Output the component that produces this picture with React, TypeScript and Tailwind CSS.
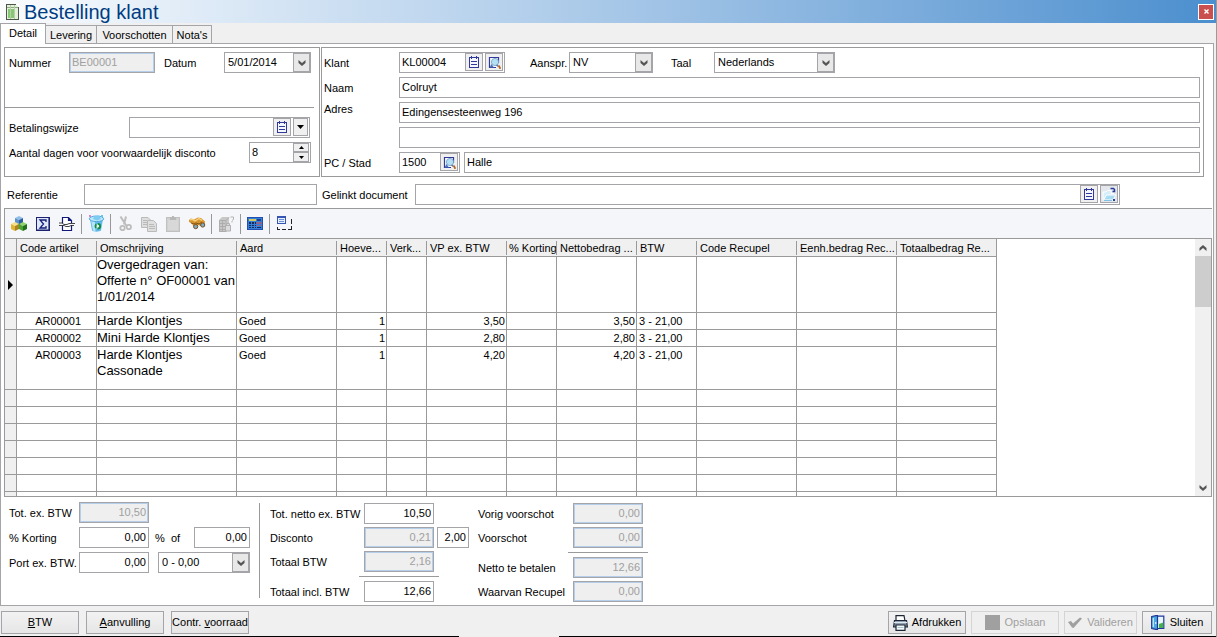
import React from "react";

type BoxProps = { className?: string; children?: React.ReactNode };

const LINE = "border-[#a5a5a9]";

function Label({ id, className = "", children }: BoxProps & { id: string }) {
  return (
    <label htmlFor={id} className={`h-[21px] shrink-0 whitespace-nowrap leading-[23px] ${className}`}>
      {children}
    </label>
  );
}

function Field({
  id,
  value = "",
  disabled = false,
  right = false,
  className = "",
}: {
  id: string;
  value?: string;
  disabled?: boolean;
  right?: boolean;
  className?: string;
}) {
  return (
    <input
      id={id}
      defaultValue={value}
      disabled={disabled}
      className={`h-[21px] min-w-0 border px-[2px] pb-[2px] leading-4 outline-none ${LINE} ${right ? "text-right" : ""} ${
        disabled ? "bg-[#efefef] text-[#a0a0a0] ring-1 ring-inset ring-[#b5cfea]" : "bg-white"
      } ${className}`}
    />
  );
}

function Combo({ id, value, className = "" }: { id: string; value: string; className?: string }) {
  return (
    <div className={`relative flex h-[21px] shrink-0 ${className}`}>
      <select
        id={id}
        defaultValue={value}
        className={`w-full appearance-none border bg-white pl-[3px] pr-5 pb-px leading-4 outline-none ${LINE}`}
      >
        <option>{value}</option>
      </select>
      <span
        className={`pointer-events-none absolute inset-y-0 right-0 flex w-[18px] items-center justify-center border-2 border-l bg-[#e8e8e8] ${LINE}`}
      >
        <Chevron />
      </span>
    </div>
  );
}

function Chevron({ up = false }: { up?: boolean }) {
  return (
    <svg width="8" height="6" viewBox="0 0 8 6" className={up ? "rotate-180" : ""}>
      <path d="M0.5 0L4 3L7.5 0V3L4 6L0.5 3Z" fill="#555" />
    </svg>
  );
}

function MiniButton({ label, className = "w-[18px]", children }: BoxProps & { label: string }) {
  return (
    <button
      type="button"
      aria-label={label}
      className={`flex h-[18px] shrink-0 items-center justify-center border bg-[#f0f0f0] ${LINE} ${className}`}
    >
      {children}
    </button>
  );
}

function Composite({ id, value = "", className = "", children }: BoxProps & { id: string; value?: string }) {
  return (
    <div className={`flex h-[21px] items-start gap-[2px] border bg-white pr-px ${LINE} ${className}`}>
      <input id={id} defaultValue={value} className="h-[19px] w-0 min-w-0 flex-1 bg-transparent px-[2px] pb-[2px] leading-4 outline-none" />
      {children}
    </div>
  );
}

const ListIcon = () => (
  <svg width="12" height="13" viewBox="0 0 12 13" shapeRendering="crispEdges">
    <rect x="1" y="1" width="10" height="11" fill="#30389a" />
    <rect x="2" y="2" width="8" height="9" fill="#f4f7ff" />
    <path d="M3 0H4V3H3ZM8 0H9V3H8ZM3 5H9V6H3ZM3 8H9V9H3Z" fill="#30389a" />
  </svg>
);

const SearchIcon = () => (
  <svg width="13" height="13" viewBox="0 0 13 13">
    <path d="M10.5 7V1.5H1.5V11.5H8" fill="#fff" stroke="#30389a" strokeWidth="1.2" />
    <circle cx="7" cy="6" r="3.6" fill="#b4e0f4" stroke="#6f9cc4" strokeWidth="0.8" />
    <path d="M3.5 8L1.5 11.5H6Z" fill="#4d74b8" />
    <path d="M8.5 9L10.5 10.5" stroke="#5d6f9c" strokeWidth="1.5" />
    <path d="M10.8 9.5L12.3 12.8" stroke="#b5651d" strokeWidth="1.8" />
  </svg>
);

const FolderIcon = () => (
  <svg width="16" height="16" viewBox="0 0 16 16">
    <rect width="16" height="16" fill="#e4e8ec" />
    <path d="M2 13.5V6H5L6.5 4.5H10V7.5H13" fill="#d4eefa" stroke="#fff" />
    <path d="M2.5 14L5.5 9H15L12 14Z" fill="#a9dcf3" stroke="#fff" />
    <path d="M3 14.5H11" stroke="#7fc2e4" />
    <path d="M9.5 2.5H12.5L13.5 3.5V5.5H11.5" fill="none" stroke="#283a9c" strokeWidth="1.5" />
    <rect x="12" y="13" width="2" height="2" fill="#283a9c" />
  </svg>
);

const SheetIcon = () => (
  <svg width="13" height="16" viewBox="0 0 13 16" shapeRendering="crispEdges">
    <rect width="13" height="16" fill="#4b5648" />
    <rect x="1" y="1" width="11" height="14" fill="#e3efda" />
    <path d="M1 3H12V4H1Z" fill="#8ca880" />
    <rect x="2" y="5" width="6" height="9" fill="#85c773" />
    <path d="M4 1H5V15H4ZM8 1H9V15H8Z" fill="#b5cfa8" />
    <path d="M10 0H13V3H12V2H11V1H10Z" fill="#fff" />
  </svg>
);

function Cube({ x, y, top, left, right }: { x: number; y: number; top: string; left: string; right: string }) {
  return (
    <g transform={`translate(${x} ${y})`}>
      <path d="M0 2L4 0L8 2L4 4Z" fill={top} />
      <path d="M0 2L4 4V9L0 7Z" fill={left} />
      <path d="M8 2L4 4V9L8 7Z" fill={right} />
    </g>
  );
}

const CubesIcon = () => (
  <svg width="16" height="16" viewBox="0 0 16 16">
    <Cube x={4} y={0} top="#8fbfe8" left="#5c92cc" right="#2c5c9c" />
    <Cube x={0} y={6} top="#f6e188" left="#e0b534" right="#a98420" />
    <Cube x={8} y={6} top="#8fd56a" left="#4aa633" right="#246f1c" />
  </svg>
);

const SigmaIcon = () => (
  <svg width="14" height="14" viewBox="0 0 14 14">
    <rect x="0.5" y="0.5" width="13" height="13" fill="#dfe8f8" stroke="#1b2370" />
    <path d="M1 13H13V1" fill="none" stroke="#1b2370" strokeWidth="1.2" />
    <path d="M10 5V3H4L7.5 7L4 11H10V9" fill="none" stroke="#151d78" strokeWidth="1.3" />
  </svg>
);

const PageBreakIcon = () => (
  <svg width="16" height="16" viewBox="0 0 16 16" fill="none" stroke="#10187a">
    <path d="M3.5 7V1.5H9.5L12.5 4.5V7M9.5 1.5V4.5H12.5M3.5 9V14.5H12.5V9" fill="#fff" strokeWidth="1.2" />
    <path d="M0 7H3L5 8.5H8L10 7.5H16M0 9.5H5L7 10.5H10L12 9.5H15" stroke="#333" strokeWidth="0.9" />
  </svg>
);

const BinIcon = () => (
  <svg width="17" height="17" viewBox="0 0 17 17">
    <path d="M2 4L4 15.5C6 17 11 17 13 15.5L15 4Z" fill="#62b9ea" />
    <path d="M3 5L5 15.5C6 16 7 16 7.5 16L7 6Z" fill="#b4e4f9" />
    <ellipse cx="8.5" cy="3.8" rx="7.2" ry="2.8" fill="#bfe8fa" stroke="#4ba8de" />
    <path d="M5 4L6 1.5L11 0.5L13 4L9 5.5Z" fill="#7ecbf2" />
    <rect x="1" y="0" width="2" height="2" fill="#dd86cf" />
    <rect x="13" y="0" width="2" height="2" fill="#61c8e5" />
    <circle cx="9.8" cy="11.2" r="2.3" fill="#dff6ea" stroke="#168a42" strokeWidth="1.9" strokeDasharray="3.6 1.2" />
  </svg>
);

const CutIcon = () => (
  <svg width="14" height="16" viewBox="0 0 14 16" fill="none" stroke="#bcbcbc">
    <path d="M2.5 0.5L8.5 10M8 0.5L6 8.5" strokeWidth="2" />
    <circle cx="4.5" cy="12" r="2.2" strokeWidth="1.8" />
    <circle cx="10.8" cy="11" r="2.2" strokeWidth="1.8" />
  </svg>
);

const CopyIcon = () => (
  <svg width="16" height="16" viewBox="0 0 16 16" fill="#dedede" stroke="#bababa">
    <path d="M0.5 1.5H7L9.5 4V11.5H0.5Z" />
    <path d="M2 4.5H6M2 6.5H6M2 8.5H6" />
    <path d="M6.5 4.5H12.5L15.5 7.5V15.5H6.5Z" />
    <path d="M8 8.5H13M8 10.5H14M8 12.5H14" />
  </svg>
);

const PasteIcon = () => (
  <svg width="14" height="16" viewBox="0 0 14 16">
    <rect x="0.5" y="1.5" width="13" height="14" fill="#d0d0d0" stroke="#c0c0c0" />
    <rect x="2" y="4" width="10" height="10" fill="#d8d8d8" />
    <path d="M4 1H6V0H8V1H10V4H4Z" fill="#b8b8b8" />
  </svg>
);

const BinocularsIcon = () => (
  <svg width="17" height="13" viewBox="0 0 17 13">
    <path d="M0 3L2 1.5L5 2.5L9 0.5L12 1L16 4.5L15.5 8L12 9L9 8L8 11L5 11L3 6.5L0 5Z" fill="#d8942c" />
    <path d="M1 3L3 2.3L6 4L10 1.5L13 3.5" fill="none" stroke="#f8d483" strokeWidth="1.3" />
    <path d="M2 6L5 7L7 6L10 7L13 5" fill="none" stroke="#8a5514" strokeWidth="1" />
    <circle cx="6.7" cy="9.6" r="2.1" fill="#7eabc4" stroke="#755024" />
    <circle cx="13.7" cy="8" r="2.1" fill="#7eabc4" stroke="#755024" />
  </svg>
);

const ServerIcon = () => (
  <svg width="17" height="16" viewBox="0 0 17 16">
    <path d="M1 4L4 1H11V13L8 16H1Z" fill="#c8c8c8" />
    <path d="M1.5 4.5H8V15.5H1.5ZM8 4.5L11 1.5M2 7.5H7M2 10.5H7M2 13.5H7M4.5 5V15" fill="none" stroke="#adadad" />
    <path d="M7.5 9.5H12.5V15H7.5ZM8.5 9V7.5H11.5V9" fill="#dcdcdc" stroke="#b0b0b0" />
    <path d="M12.5 1H15.5V3.5L14 4.5M14 5V6.5" fill="none" stroke="#b3b3b3" />
  </svg>
);

const CalculatorIcon = () => (
  <svg width="16" height="13" viewBox="0 0 16 13" shapeRendering="crispEdges">
    <rect width="16" height="13" fill="#2350b0" />
    <rect x="1" y="1" width="14" height="11" fill="#3480d8" />
    <rect x="2" y="2" width="7" height="2" fill="#d2c860" />
    <rect x="10" y="2" width="4" height="2" fill="#1d3f8c" />
    <path d="M2 5H4V7H2ZM5 5H7V7H5ZM8 5H9V7H8ZM2 8H4V9H2ZM5 8H7V9H5ZM8 8H9V9H8ZM2 10H4V11H2ZM5 10H7V11H5ZM8 10H9V11H8Z" fill="#14295e" />
    <path d="M10 5H12V7H10ZM13 5H14V7H13ZM10 8H12V9H10ZM13 8H14V9H13Z" fill="#e04848" />
    <path d="M10 10H14V11H10Z" fill="#14295e" />
  </svg>
);

const FormIcon = () => (
  <svg width="17" height="15" viewBox="0 0 17 15" shapeRendering="crispEdges">
    <rect x="1" y="0" width="9" height="8" fill="#3555b4" />
    <rect x="2" y="2" width="7" height="5" fill="#e6effc" />
    <path d="M3 3H8V4H3ZM3 5H8V6H3Z" fill="#6f8fd8" />
    <path d="M1 11H2V13H4V14H1ZM6 13H10V14H6ZM15 3H16V8H15ZM15 10H16V14H12V13H15Z" fill="#222" />
  </svg>
);

const PrinterIcon = () => (
  <svg width="15" height="16" viewBox="0 0 15 16">
    <path d="M3 6V0.7H11L12 6" fill="#fff" stroke="#1e2635" strokeWidth="1.2" />
    <path d="M1.5 5.5H13.5L14.4 12H0.6Z" fill="#8b9bab" stroke="#1e2635" strokeWidth="1.2" />
    <path d="M1 7.5H14" stroke="#dfe8ee" strokeWidth="1.2" />
    <path d="M3 10H12V15.3H3Z" fill="#f4fafc" stroke="#1e2635" strokeWidth="1.2" />
    <path d="M4.5 12.5H10.5" stroke="#a9c4d0" />
  </svg>
);

const CheckIcon = () => (
  <svg width="15" height="11" viewBox="0 0 15 11">
    <path d="M0 5L3 4L5 6.5L12 0.5L14 1.5L5.5 11L4 10.5Z" fill="#a0a0a0" />
  </svg>
);

const DoorIcon = () => (
  <svg width="14" height="15" viewBox="0 0 14 15">
    <path d="M5 1.2H12.8V13.5H5Z" fill="#e8f6ff" stroke="#2336a0" strokeWidth="1.2" />
    <path d="M8 9L12.2 7.5V13H8Z" fill="#45b04a" />
    <path d="M0.7 1.5L6.5 0.3V14.7L0.7 13.5Z" fill="#49a8e0" stroke="#1d3495" strokeWidth="1.2" />
    <path d="M2.3 3V12" stroke="#b5e5fb" strokeWidth="1.4" />
    <path d="M4.8 7V9" stroke="#fff" />
  </svg>
);

function Tool({ label, children }: BoxProps & { label: string }) {
  return (
    <button type="button" aria-label={label} className="flex h-6 w-6 items-center justify-center">
      {children}
    </button>
  );
}

function ToolDivider() {
  return (
    <span className="flex w-[5px] justify-center">
      <span className="h-5 w-px bg-[#98989c]" />
    </span>
  );
}

const COLUMNS: { title: string; width: string }[] = [
  { title: "Code artikel", width: "w-[80px]" },
  { title: "Omschrijving", width: "w-[140px]" },
  { title: "Aard", width: "w-[100px]" },
  { title: "Hoeve...", width: "w-[50px]" },
  { title: "Verk...", width: "w-[40px]" },
  { title: "VP ex. BTW", width: "w-[80px]" },
  { title: "% Korting", width: "w-[50px]" },
  { title: "Nettobedrag ...", width: "w-[80px]" },
  { title: "BTW", width: "w-[60px]" },
  { title: "Code Recupel", width: "w-[100px]" },
  { title: "Eenh.bedrag Rec...", width: "w-[100px]" },
  { title: "Totaalbedrag Re...", width: "w-[100px]" },
];

type Line = { height: string; current?: boolean; cells: string[] };

const EMPTY = Array<string>(12).fill("");

const LINES: Line[] = [
  { height: "h-[56px]", current: true, cells: ["", "Overgedragen van: Offerte n° OF00001 van 1/01/2014", ...EMPTY.slice(2)] },
  { height: "h-[17px]", cells: ["AR00001", "Harde Klontjes", "Goed", "1", "", "3,50", "", "3,50", "3 - 21,00", "", "", ""] },
  { height: "h-[17px]", cells: ["AR00002", "Mini Harde Klontjes", "Goed", "1", "", "2,80", "", "2,80", "3 - 21,00", "", "", ""] },
  { height: "h-[43px]", cells: ["AR00003", "Harde Klontjes Cassonade", "Goed", "1", "", "4,20", "", "4,20", "3 - 21,00", "", "", ""] },
  ...Array.from({ length: 12 }, () => ({ height: "h-[17px]", cells: EMPTY })),
];

function cellStyle(column: number) {
  if (column === 0) return "pr-[15px] text-right leading-4";
  if (column === 1) return "text-[13px] leading-4";
  if (column === 3 || column === 5 || column === 7) return "pr-px text-right leading-4";
  return "pl-[2px] leading-4";
}

function OrderGrid() {
  return (
    <div className="mr-px flex h-0 min-h-[200px] grow overflow-hidden border border-[#9a9a9a] bg-white">
      <div className="min-w-0 flex-1 overflow-hidden">
        <table className="w-[992px] table-fixed border-separate border-spacing-0">
          <thead>
            <tr className="h-[18px] bg-[#f0f0f0]">
              <th className="w-[12px] border-b border-r border-[#9a9a9a] p-0" />
              {COLUMNS.map((c, i) => (
                <th key={c.title} className={`border-b border-[#9a9a9a] p-0 text-left font-normal ${c.width} ${i === 11 ? "border-r" : ""}`}>
                  <div
                    className={`h-[14px] overflow-hidden whitespace-nowrap leading-[15px] ${i === 6 ? "pl-[2px]" : "pl-[3px]"} ${
                      i === 11 ? "" : "border-r border-[#9a9a9a]"
                    }`}
                  >
                    {c.title}
                  </div>
                </th>
              ))}
            </tr>
          </thead>
          <tbody>
            {LINES.map((line, r) => (
              <tr key={r} className={line.height}>
                <td className="border-b border-r border-[#9a9a9a] bg-[#f0f0f0] p-0 align-middle">
                  {line.current && (
                    <svg width="6" height="10" viewBox="0 0 6 10" className="ml-[3px]">
                      <path d="M0 0L5 5L0 10Z" fill="#000" />
                    </svg>
                  )}
                </td>
                {line.cells.map((text, i) => (
                  <td key={i} className={`border-b border-r border-[#9a9a9a] p-0 align-top ${cellStyle(i)}`}>
                    {text}
                  </td>
                ))}
              </tr>
            ))}
          </tbody>
        </table>
      </div>
      <div className="flex w-4 shrink-0 flex-col bg-[#f0f0f0]">
        <button type="button" aria-label="Omhoog" className="flex h-[17px] items-center justify-center">
          <Chevron up />
        </button>
        <div className="h-[51px] bg-[#cdcdcd]" />
        <button type="button" aria-label="Omlaag" className="mt-auto flex h-[17px] items-center justify-center">
          <Chevron />
        </button>
      </div>
    </div>
  );
}

function FootButton({ className = "", disabled = false, children }: BoxProps & { disabled?: boolean }) {
  return (
    <button
      type="button"
      disabled={disabled}
      className={`flex h-[23px] shrink-0 items-center justify-center whitespace-nowrap border ${
        disabled ? "border-[#d4d4d4] bg-[#efefef] text-[#a0a0a0]" : "border-[#a5a5a9] bg-linear-to-b from-[#f2f2f2] to-[#e6e6e6]"
      } ${className}`}
    >
      {children}
    </button>
  );
}

export default function App() {
  return (
    <div className="flex min-h-screen w-full flex-col border-r border-[#9a9a9a] bg-[#f0f0f0] font-['Liberation_Sans',Arial,sans-serif] text-[11px] text-black">
      <header className="flex h-[23px] shrink-0 items-center bg-linear-to-r from-[#fafcfe] via-[#a8c8e8] via-50% to-[#4b8fce] pl-[6px] pr-[2px]">
        <SheetIcon />
        <h1 className="ml-[5px] text-[20px] leading-6 text-[#003c82]">Bestelling klant</h1>
        <button
          type="button"
          aria-label="Venster sluiten"
          className="ml-auto flex h-4 w-4 items-center justify-center border border-white bg-[#c9504e]"
        >
          <svg width="5" height="5" viewBox="0 0 5 5">
            <path d="M0.5 0.5L4.5 4.5M4.5 0.5L0.5 4.5" stroke="#fff" strokeWidth="1.4" />
          </svg>
        </button>
      </header>

      <div role="tablist" className="flex h-5 shrink-0 items-end">
        <button type="button" role="tab" aria-selected="true" className={`relative -mb-px h-[21px] w-[46px] border border-b-0 bg-white pb-px ${LINE}`}>
          Detail
        </button>
        <button type="button" role="tab" aria-selected="false" className={`h-[18px] w-[51px] border-r border-t pt-px ${LINE}`}>
          Levering
        </button>
        <button type="button" role="tab" aria-selected="false" className={`h-[18px] w-[76px] border-r border-t pt-px ${LINE}`}>
          Voorschotten
        </button>
        <button type="button" role="tab" aria-selected="false" className={`h-[18px] w-[39px] border-r border-t pt-px ${LINE}`}>
          Nota's
        </button>
      </div>

      <main className={`mr-[2px] flex grow flex-col border bg-white pl-[3px] pt-[3px] ${LINE}`}>
        <div className="mr-[9px] flex gap-px">
          <section className="w-[316px] shrink-0 border border-[#9a9a9a] pt-1">
            <div className="flex pl-1">
              <Label id="nummer" className="w-[60px]">Nummer</Label>
              <Field id="nummer" value="BE00001" disabled className="w-[86px]" />
              <Label id="datum" className="ml-[9px] w-[60px]">Datum</Label>
              <Combo id="datum" value="5/01/2014" className="w-[87px]" />
            </div>
            <hr className="mb-[9px] mr-[5px] mt-[34px] border-[#9a9a9a]" />
            <div className="flex pl-1">
              <Label id="betaling" className="w-[120px]">Betalingswijze</Label>
              <Composite id="betaling" className="w-[181px]">
                <MiniButton label="Lijst"><ListIcon /></MiniButton>
                <MiniButton label="Kies" className="w-[15px]">
                  <svg width="7" height="4" viewBox="0 0 7 4"><path d="M0 0H7L3.5 4Z" /></svg>
                </MiniButton>
              </Composite>
            </div>
            <div className="mt-1 flex pl-1">
              <Label id="dagen" className="w-[240px]">Aantal dagen voor voorwaardelijk disconto</Label>
              <Composite id="dagen" value="8" className="w-[62px]">
                <div className="flex w-4 flex-col">
                  <button type="button" aria-label="Meer" className={`flex h-[9px] items-center justify-center border bg-[#f0f0f0] ${LINE}`}>
                    <svg width="5" height="3" viewBox="0 0 5 3"><path d="M0 3H5L2.5 0Z" /></svg>
                  </button>
                  <button type="button" aria-label="Minder" className={`flex h-[10px] items-center justify-center border bg-[#f0f0f0] ${LINE}`}>
                    <svg width="5" height="3" viewBox="0 0 5 3"><path d="M0 0H5L2.5 3Z" /></svg>
                  </button>
                </div>
              </Composite>
            </div>
          </section>

          <section className="flex min-w-0 flex-1 flex-col gap-1 border border-[#9a9a9a] pb-[3px] pl-[2px] pr-[3px] pt-1">
            <div className="flex">
              <Label id="klant" className="w-[75px]">Klant</Label>
              <Composite id="klant" value="KL00004" className="w-[106px]">
                <MiniButton label="Lijst"><ListIcon /></MiniButton>
                <MiniButton label="Zoeken"><SearchIcon /></MiniButton>
              </Composite>
              <Label id="aanspr" className="ml-[25px] w-[39px]">Aanspr.</Label>
              <Combo id="aanspr" value="NV" className="w-[84px]" />
              <Label id="taal" className="ml-[18px] w-[43px]">Taal</Label>
              <Combo id="taal" value="Nederlands" className="w-[121px]" />
            </div>
            <div className="flex">
              <Label id="naam" className="w-[75px]">Naam</Label>
              <Field id="naam" value="Colruyt" className="flex-1" />
            </div>
            <div className="flex">
              <label htmlFor="adres" className="w-[75px] leading-[15px]">Adres</label>
              <Field id="adres" value="Edingensesteenweg 196" className="flex-1" />
            </div>
            <div className="flex pl-[75px]">
              <input aria-label="Adres 2" className={`h-[21px] min-w-0 flex-1 border bg-white px-[2px] ${LINE}`} />
            </div>
            <div className="flex">
              <Label id="pc" className="w-[75px]">PC / Stad</Label>
              <Composite id="pc" value="1500" className="w-[61px]">
                <MiniButton label="Zoeken"><SearchIcon /></MiniButton>
              </Composite>
              <input aria-label="Stad" defaultValue="Halle" className={`ml-1 h-[21px] min-w-0 flex-1 border bg-white px-[2px] pb-[2px] ${LINE}`} />
            </div>
          </section>
        </div>

        <div className="mb-[3px] mr-[93px] mt-[7px] flex pl-[3px]">
          <Label id="referentie" className="w-[77px]">Referentie</Label>
          <Field id="referentie" className="w-[233px]" />
          <Label id="gelinkt" className="ml-[5px] w-[93px]">Gelinkt document</Label>
          <Composite id="gelinkt" className="flex-1">
            <MiniButton label="Lijst"><ListIcon /></MiniButton>
            <MiniButton label="Openen"><FolderIcon /></MiniButton>
          </Composite>
        </div>

        <div role="toolbar" className="mr-px flex h-[30px] shrink-0 items-center border-l border-t border-[#9a9a9a] bg-[#f5f6f9] pl-[2px]">
          <Tool label="Artikelen"><CubesIcon /></Tool>
          <Tool label="Totaal"><SigmaIcon /></Tool>
          <Tool label="Pagina-einde"><PageBreakIcon /></Tool>
          <ToolDivider />
          <Tool label="Verwijderen"><BinIcon /></Tool>
          <ToolDivider />
          <Tool label="Knippen"><CutIcon /></Tool>
          <Tool label="Kopiëren"><CopyIcon /></Tool>
          <Tool label="Plakken"><PasteIcon /></Tool>
          <Tool label="Zoeken"><BinocularsIcon /></Tool>
          <ToolDivider />
          <Tool label="Voorraad"><ServerIcon /></Tool>
          <ToolDivider />
          <Tool label="Rekenmachine"><CalculatorIcon /></Tool>
          <ToolDivider />
          <Tool label="Formulier"><FormIcon /></Tool>
        </div>

        <OrderGrid />

        <div className="flex shrink-0 pb-[3px] pt-[6px]">
          <section className="-mt-px flex w-[255px] shrink-0 flex-col gap-1 pl-[5px]">
            <div className="flex">
              <Label id="totex" className="w-[70px]">Tot. ex. BTW</Label>
              <Field id="totex" value="10,50" disabled right className="w-[70px]" />
            </div>
            <div className="flex">
              <Label id="korting" className="w-[70px]">% Korting</Label>
              <Field id="korting" value="0,00" right className="w-[70px]" />
              <Label id="kortingbedrag" className="w-[45px] whitespace-pre pl-[6px]">{"%  of"}</Label>
              <Field id="kortingbedrag" value="0,00" right className="w-[56px]" />
            </div>
            <div className="flex">
              <Label id="port" className="w-[70px]">Port ex. BTW.</Label>
              <Field id="port" value="0,00" right className="w-[70px]" />
              <div className="ml-[9px] flex">
                <Combo id="portbtw" value="0 - 0,00" className="w-[92px]" />
              </div>
            </div>
          </section>

          <section className="mb-1 flex shrink-0 flex-col gap-[3px] border-l border-[#9a9a9a] pl-[10px]">
            <div className="flex">
              <Label id="netto" className="w-[94px]">Tot. netto ex. BTW</Label>
              <Field id="netto" value="10,50" right className="w-[70px]" />
            </div>
            <div className="flex">
              <Label id="disconto" className="w-[94px]">Disconto</Label>
              <Field id="disconto" value="0,21" disabled right className="w-[70px]" />
              <input aria-label="Disconto %" defaultValue="2,00" className={`ml-[3px] h-[21px] w-[32px] border bg-white px-[2px] pb-[2px] text-right ${LINE}`} />
            </div>
            <div className="flex">
              <Label id="totbtw" className="w-[94px]">Totaal BTW</Label>
              <Field id="totbtw" value="2,16" disabled right className="w-[70px]" />
            </div>
            <hr className="my-px ml-[89px] w-[80px] border-[#9a9a9a]" />
            <div className="-mb-1 flex">
              <Label id="incl" className="w-[94px]">Totaal incl. BTW</Label>
              <Field id="incl" value="12,66" right className="w-[70px]" />
            </div>
          </section>

          <section className="ml-[9px] flex shrink-0 flex-col gap-[3px]">
            <div className="flex">
              <Label id="vorig" className="w-[95px]">Vorig voorschot</Label>
              <Field id="vorig" value="0,00" disabled right className="w-[70px]" />
            </div>
            <div className="flex">
              <Label id="voorschot" className="w-[95px]">Voorschot</Label>
              <Field id="voorschot" value="0,00" disabled right className="w-[70px]" />
            </div>
            <hr className="my-px ml-[90px] w-[80px] border-[#9a9a9a]" />
            <div className="flex">
              <Label id="betalen" className="w-[95px]">Netto te betalen</Label>
              <Field id="betalen" value="12,66" disabled right className="w-[70px]" />
            </div>
            <div className="flex">
              <Label id="recupel" className="w-[95px]">Waarvan Recupel</Label>
              <Field id="recupel" value="0,00" disabled right className="w-[70px]" />
            </div>
          </section>
        </div>
      </main>

      <footer className="shrink-0">
        <div className="flex pb-[2px] pl-px pr-1 pt-[5px]">
          <div className="flex gap-[7px]">
            <FootButton className="w-[78px]"><span><u>B</u>TW</span></FootButton>
            <FootButton className="w-[78px]"><span><u>A</u>anvulling</span></FootButton>
            <FootButton className="w-[78px]"><span>Contr. <u>v</u>oorraad</span></FootButton>
          </div>
          <div className="ml-auto flex gap-[5px]">
            <FootButton className="w-[78px] gap-1"><PrinterIcon />Afdrukken</FootButton>
            <FootButton disabled className="w-[88px] gap-[5px]"><span className="size-[15px] bg-[#a0a0a0]" />Opslaan</FootButton>
            <FootButton disabled className="w-[73px] gap-1"><CheckIcon />Valideren</FootButton>
            <FootButton className="w-[70px] gap-[5px]"><DoorIcon />Sluiten</FootButton>
          </div>
        </div>
        <div className="flex h-px">
          <div className="w-[459px] bg-black" />
          <div className="ml-[100px] flex-1 bg-black" />
        </div>
      </footer>
    </div>
  );
}
